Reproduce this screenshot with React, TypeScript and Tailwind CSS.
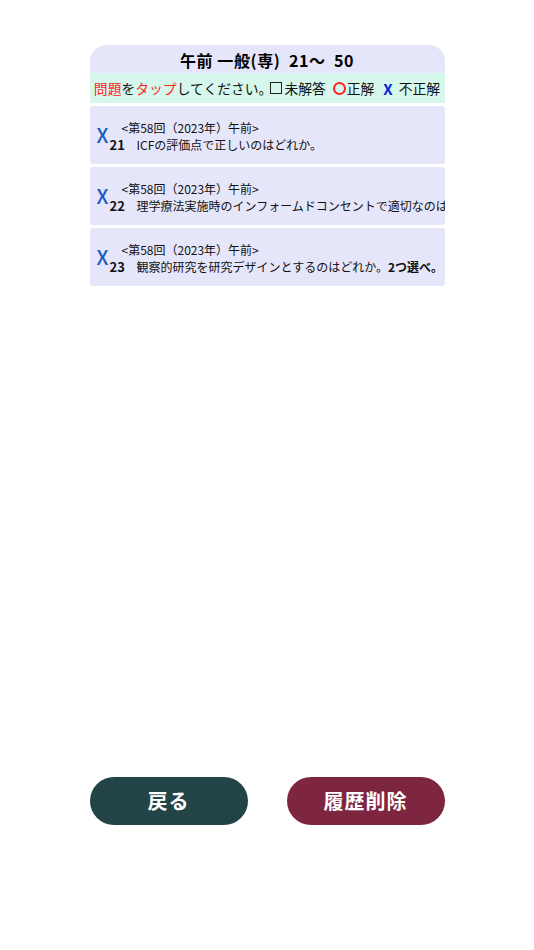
import React from "react";

type Item = {
  no: number;
  title: React.ReactNode;
};

const items: Item[] = [
  { no: 21, title: "ICFの評価点で正しいのはどれか。" },
  { no: 22, title: "理学療法実施時のインフォームドコンセントで適切なのはどれか。" },
  {
    no: 23,
    title: (
      <>
        観察的研究を研究デザインとするのはどれか。<span className="font-bold">2つ選べ。</span>
      </>
    ),
  },
];

function QuestionRow({ item }: { item: Item }) {
  return (
    <div className="flex h-[58px] items-center overflow-hidden rounded-[3px] bg-[#e6e6fa] pl-[7px]">
      <span className="mt-[-1px] w-[13px] shrink-0 text-[20px] font-medium leading-none text-[#1a5bc4]">
        X
      </span>
      <div className="flex flex-col whitespace-nowrap pt-[2px]">
        <span className="pl-[12px] text-[12px] leading-[17px] text-[#111]">
          &lt;第58回（2023年）午前&gt;
        </span>
        <div className="flex items-baseline leading-[17px]">
          <span className="w-[27px] shrink-0 text-[13px] font-bold text-[#111]">{item.no}</span>
          <span className="text-[12px] text-[#111]">{item.title}</span>
        </div>
      </div>
    </div>
  );
}

export default function App() {
  return (
    <div
      className="flex min-h-[950px] w-full flex-col items-center bg-white pt-[45px]"
      style={{ fontFamily: '"Noto Sans CJK JP", "Noto Sans", sans-serif' }}
    >
      <div className="flex h-[732px] w-[355px] flex-col">
        <div className="flex h-[28px] items-center justify-center rounded-t-[16px] bg-[#e6e6fa] pt-[2px] text-[16px] font-bold tracking-[0.6px] text-black">
          午前 一般(専)&nbsp; 21〜&nbsp; 50
        </div>
        <div className="flex h-[30px] items-center justify-center whitespace-nowrap bg-[#d6f7ec] text-[13.8px] text-[#111]">
          <span className="text-[#ff1f1f]">問題</span>を<span className="text-[#ff1f1f]">タップ</span>
          してください。
          <span className="ml-[-2px] mr-[2px] inline-block h-[12px] w-[12px] shrink-0 border-[1.5px] border-[#222]" />
          未解答
          <span className="ml-[7px] mr-[1px] inline-block h-[13px] w-[13px] shrink-0 rounded-full border-2 border-[#ff2020]" />
          正解
          <span className="ml-[9px] mr-[6px] text-[15px] font-bold leading-none text-[#0a1fd8]">X</span>
          不正解
        </div>
        <div className="mt-[3px] flex flex-col gap-[3px]">
          {items.map((item) => (
            <QuestionRow key={item.no} item={item} />
          ))}
        </div>
      </div>
      <div className="flex w-[355px] justify-between">
        <button
          type="button"
          className="h-[48px] w-[158px] rounded-full bg-[#234446] text-[20px] font-bold tracking-[1px] text-white"
        >
          戻る
        </button>
        <button
          type="button"
          className="h-[48px] w-[158px] rounded-full bg-[#7e253f] text-[20px] font-bold tracking-[1px] text-white"
        >
          履歴削除
        </button>
      </div>
    </div>
  );
}
